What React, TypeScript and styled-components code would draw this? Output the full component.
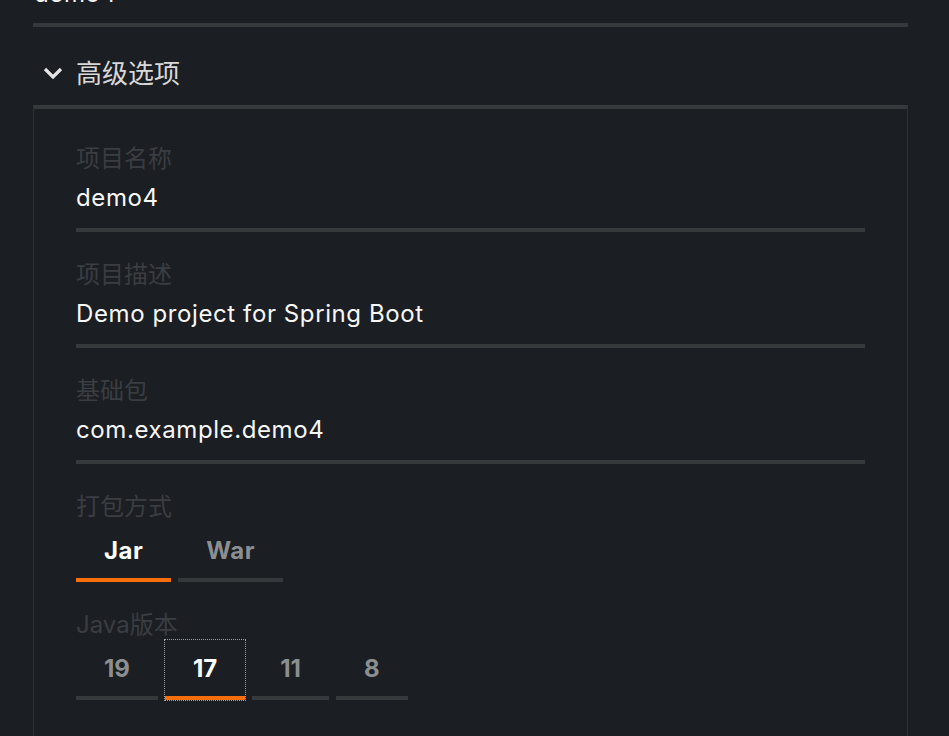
import React, { useState } from 'react';
import styled, { createGlobalStyle } from 'styled-components';

const GlobalStyle = createGlobalStyle`
  html, body {
    margin: 0;
    padding: 0;
    background: #1b1e22;
    overflow: hidden;
  }
  body {
    font-family: "Inter", "Noto Sans CJK SC", sans-serif;
    color: #f5f5f5;
  }
`;

const Page = styled.div`
    width: 875px;
    padding-left: 33px;
`;

const TopValue = styled.div`
    margin-top: -26px;
    padding-left: 1px;
    height: 40px;
    line-height: 40px;
    font-size: 24px;
    letter-spacing: 0.6px;
    color: #f5f5f5;
`;

const Bar = styled.div`
    height: 4px;
    margin-top: 9px;
    background: #36393c;
`;

const Header = styled.button`
    display: flex;
    align-items: center;
    gap: 13px;
    width: 100%;
    height: 44px;
    margin: 22px 0 12px;
    padding: 0 0 0 10px;
    border: none;
    background: transparent;
    color: #d8d8d8;
    font-family: inherit;
    font-size: 26px;
    cursor: pointer;

    svg {
        margin-top: 4px;
    }
`;

const Panel = styled.section`
    border-top: 4px solid #36393c;
    border-left: 1px solid #2d3034;
    border-right: 1px solid #2d3034;
    padding: 31px 42px 40px;
`;

const Field = styled.div`
    display: flex;
    flex-direction: column;
    margin-bottom: 24px;
`;

const Label = styled.label`
    height: 32px;
    margin-top: 3px;
    line-height: 32px;
    font-size: 24px;
    color: #3a3d41;
`;

const Value = styled.div`
    margin-top: 3px;
    height: 40px;
    line-height: 40px;
    font-size: 24px;
    letter-spacing: 0.6px;
    color: #f7f7f7;
`;

const FieldBar = styled.div`
    height: 4px;
    margin-top: 10px;
    background: #36393c;
`;

const Choices = styled.div`
    display: flex;
    gap: 7px;
    margin-top: -1px;
`;

const Choice = styled.button<{ $active: boolean; $focus?: boolean; $spacing?: number }>`
    height: 60px;
    padding: 2px 28px 0;
    border: none;
    border-bottom: 4px solid ${p => (p.$active ? '#f86e0b' : '#36393c')};
    background: transparent;
    font-family: inherit;
    font-size: 24px;
    font-weight: 700;
    line-height: 48px;
    letter-spacing: ${p => p.$spacing ?? 0}px;
    color: ${p => (p.$active ? '#ffffff' : '#8c8f92')};
    outline: ${p => (p.$focus ? '1px dotted #a0a0a0' : 'none')};
    cursor: pointer;
`;

const Chevron = () => (
    <svg width="20" height="12" viewBox="0 0 20 12" fill="none">
        <path d="M2 2 L10 10 L18 2" stroke="#e4e4e4" strokeWidth="3.2" />
    </svg>
);

const fields = [
    { label: '项目名称', value: 'demo4' },
    { label: '项目描述', value: 'Demo project for Spring Boot' },
    { label: '基础包', value: 'com.example.demo4' },
];

const packaging = ['Jar', 'War'];
const javaVersions = ['19', '17', '11', '8'];

export default function App() {
    const [pack, setPack] = useState('Jar');
    const [java, setJava] = useState('17');

    return (
        <Page>
            <GlobalStyle />
            <TopValue>demo4</TopValue>
            <Bar />

            <Header>
                <Chevron />
                <span>高级选项</span>
            </Header>

            <Panel>
                {fields.map(f => (
                    <Field key={f.label}>
                        <Label>{f.label}</Label>
                        <Value>{f.value}</Value>
                        <FieldBar />
                    </Field>
                ))}

                <Field>
                    <Label>打包方式</Label>
                    <Choices>
                        {packaging.map(p => (
                            <Choice key={p} $spacing={0.5} $active={pack === p} onClick={() => setPack(p)}>
                                {p}
                            </Choice>
                        ))}
                    </Choices>
                </Field>

                <Field>
                    <Label>Java版本</Label>
                    <Choices>
                        {javaVersions.map(v => (
                            <Choice key={v} $active={java === v} $focus={java === v} onClick={() => setJava(v)}>
                                {v}
                            </Choice>
                        ))}
                    </Choices>
                </Field>
            </Panel>
        </Page>
    );
}
